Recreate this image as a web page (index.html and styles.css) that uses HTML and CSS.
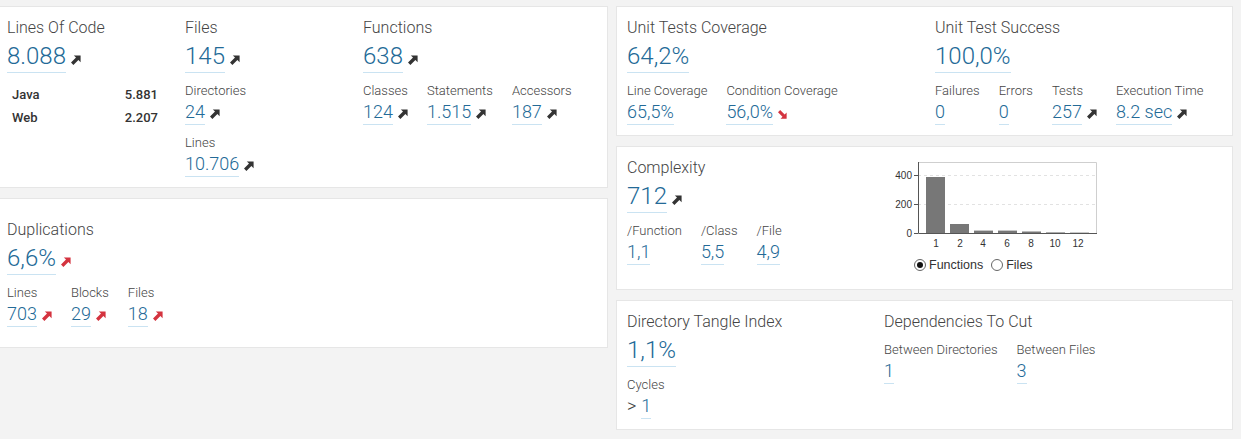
FILE: index.html
```html
<!DOCTYPE html>
<html lang="en">
<head>
<meta charset="utf-8">
<title>Overview</title>
<link rel="stylesheet" href="styles.css">
</head>
<body>
<svg class="defs" width="0" height="0" aria-hidden="true">
  <symbol id="up" viewBox="0 0 10 10"><path d="M9.6 0.4V7.2L7.4 5 2.4 10 0 7.6 5 2.6 2.8 0.4Z"/></symbol>
  <symbol id="down" viewBox="0 0 10 10"><path d="M9.6 9.6V2.8L7.4 5 2.4 0 0 2.4 5 7.4 2.8 9.6Z"/></symbol>
</svg>
<div class="page">
  <div class="column col-left">
    <section class="card">
      <div class="col w178">
        <div class="title">Lines Of Code</div>
        <div class="big-row"><span class="big">8.088</span><svg class="trend"><use href="#up"/></svg></div>
        <div class="lang-list">
          <div class="lang"><span>Java</span><span>5.881</span></div>
          <div class="lang"><span>Web</span><span>2.207</span></div>
        </div>
      </div>
      <div class="col w178">
        <div class="title">Files</div>
        <div class="big-row"><span class="big">145</span><svg class="trend"><use href="#up"/></svg></div>
        <div class="metric">
          <div class="label">Directories</div>
          <div class="value-row"><span class="val">24</span><svg class="trend"><use href="#up"/></svg></div>
        </div>
        <div class="metric">
          <div class="label">Lines</div>
          <div class="value-row"><span class="val">10.706</span><svg class="trend"><use href="#up"/></svg></div>
        </div>
      </div>
      <div class="col grow">
        <div class="title">Functions</div>
        <div class="big-row"><span class="big">638</span><svg class="trend"><use href="#up"/></svg></div>
        <div class="metrics-row">
          <div class="metric">
            <div class="label">Classes</div>
            <div class="value-row"><span class="val">124</span><svg class="trend"><use href="#up"/></svg></div>
          </div>
          <div class="metric">
            <div class="label">Statements</div>
            <div class="value-row"><span class="val">1.515</span><svg class="trend"><use href="#up"/></svg></div>
          </div>
          <div class="metric">
            <div class="label">Accessors</div>
            <div class="value-row"><span class="val">187</span><svg class="trend"><use href="#up"/></svg></div>
          </div>
        </div>
      </div>
    </section>

    <section class="card card-tall">
      <div class="col grow">
        <div class="title">Duplications</div>
        <div class="big-row"><span class="big">6,6%</span><svg class="trend bad"><use href="#up"/></svg></div>
        <div class="metrics-row">
          <div class="metric">
            <div class="label">Lines</div>
            <div class="value-row"><span class="val">703</span><svg class="trend bad"><use href="#up"/></svg></div>
          </div>
          <div class="metric">
            <div class="label">Blocks</div>
            <div class="value-row"><span class="val">29</span><svg class="trend bad"><use href="#up"/></svg></div>
          </div>
          <div class="metric">
            <div class="label">Files</div>
            <div class="value-row"><span class="val">18</span><svg class="trend bad"><use href="#up"/></svg></div>
          </div>
        </div>
      </div>
    </section>
  </div>

  <div class="column col-right">
    <section class="card">
      <div class="col w308">
        <div class="title">Unit Tests Coverage</div>
        <div class="big-row"><span class="big">64,2%</span></div>
        <div class="metrics-row">
          <div class="metric">
            <div class="label">Line Coverage</div>
            <div class="value-row"><span class="val">65,5%</span></div>
          </div>
          <div class="metric">
            <div class="label">Condition Coverage</div>
            <div class="value-row"><span class="val">56,0%</span><svg class="trend bad down"><use href="#down"/></svg></div>
          </div>
        </div>
      </div>
      <div class="col grow">
        <div class="title">Unit Test Success</div>
        <div class="big-row"><span class="big">100,0%</span></div>
        <div class="metrics-row">
          <div class="metric">
            <div class="label">Failures</div>
            <div class="value-row"><span class="val">0</span></div>
          </div>
          <div class="metric">
            <div class="label">Errors</div>
            <div class="value-row"><span class="val">0</span></div>
          </div>
          <div class="metric">
            <div class="label">Tests</div>
            <div class="value-row"><span class="val">257</span><svg class="trend"><use href="#up"/></svg></div>
          </div>
          <div class="metric">
            <div class="label">Execution Time</div>
            <div class="value-row"><span class="val">8.2 sec</span><svg class="trend"><use href="#up"/></svg></div>
          </div>
        </div>
      </div>
    </section>

    <section class="card">
      <div class="col w256">
        <div class="title">Complexity</div>
        <div class="big-row"><span class="big">712</span><svg class="trend"><use href="#up"/></svg></div>
        <div class="metrics-row">
          <div class="metric">
            <div class="label">/Function</div>
            <div class="value-row"><span class="val">1,1</span></div>
          </div>
          <div class="metric">
            <div class="label">/Class</div>
            <div class="value-row"><span class="val">5,5</span></div>
          </div>
          <div class="metric">
            <div class="label">/File</div>
            <div class="value-row"><span class="val">4,9</span></div>
          </div>
        </div>
      </div>
      <div class="col grow chart">
        <svg class="histogram" width="220" height="98" viewBox="0 0 220 98">
          <line class="grid" x1="35" y1="18.5" x2="214" y2="18.5"/>
          <line class="grid" x1="35" y1="47.5" x2="214" y2="47.5"/>
          <path class="frame" d="M35 5.5H213.5V76"/>
          <rect class="bar" x="43" y="20" width="19" height="56"/>
          <rect class="bar" x="67" y="67" width="19" height="9"/>
          <rect class="bar" x="91" y="73.6" width="19" height="2.4"/>
          <rect class="bar" x="115" y="73.6" width="19" height="2.4"/>
          <rect class="bar" x="139" y="74.5" width="19" height="1.5"/>
          <rect class="bar" x="163" y="75.4" width="19" height="0.6"/>
          <rect class="bar" x="187" y="75.6" width="19" height="0.4"/>
          <path class="axis" d="M35.5 5V76.5H214M31 18.5H35M31 47.5H35M31 76.5H35"/>
          <g class="ylab">
            <text x="29" y="22">400</text>
            <text x="29" y="51">200</text>
            <text x="29" y="80">0</text>
          </g>
          <g class="xlab">
            <text x="53" y="90">1</text>
            <text x="77" y="90">2</text>
            <text x="100" y="90">4</text>
            <text x="124" y="90">6</text>
            <text x="148" y="90">8</text>
            <text x="172" y="90">10</text>
            <text x="195" y="90">12</text>
          </g>
        </svg>
        <div class="legend">
          <span class="legend-item"><span class="radio checked"></span>Functions</span>
          <span class="legend-item"><span class="radio"></span>Files</span>
        </div>
      </div>
    </section>

    <section class="card">
      <div class="col w257">
        <div class="title">Directory Tangle Index</div>
        <div class="big-row"><span class="big">1,1%</span></div>
        <div class="metric">
          <div class="label">Cycles</div>
          <div class="value-row"><span class="prefix">&gt;</span><span class="val">1</span></div>
        </div>
      </div>
      <div class="col grow">
        <div class="title">Dependencies To Cut</div>
        <div class="metrics-row after-title">
          <div class="metric">
            <div class="label">Between Directories</div>
            <div class="value-row"><span class="val">1</span></div>
          </div>
          <div class="metric">
            <div class="label">Between Files</div>
            <div class="value-row"><span class="val">3</span></div>
          </div>
        </div>
      </div>
    </section>
  </div>
</div>
</body>
</html>
```

FILE: styles.css
```css
* { box-sizing: border-box; }

html, body {
  margin: 0;
  background: #f3f3f3;
}

body {
  font-family: Roboto, "Liberation Sans", sans-serif;
  color: #444;
}

.defs { position: absolute; width: 0; height: 0; overflow: hidden; }

.page {
  display: flex;
  gap: 8px;
  padding-top: 6px;
  margin-left: -4px;
  width: 1237px;
}

.column {
  display: flex;
  flex-direction: column;
  gap: 10px;
}

.col-left { width: 612px; }
.col-right { width: 617px; }

.card {
  display: flex;
  background: #fff;
  border: 1px solid #e6e6e6;
  padding: 10px;
}

.card-tall { padding: 20px 10px; }

.col { flex: none; }
.grow { flex: 1; min-width: 0; }
.w178 { width: 178px; }
.w308 { width: 308px; }
.w256 { width: 256px; }
.w257 { width: 257px; }

.title {
  font-size: 16px;
  line-height: 20px;
  font-weight: 300;
  color: #444;
  margin-top: 1px;
}

.big-row {
  display: flex;
  align-items: flex-end;
  margin-top: 3px;
}

.big {
  font-size: 24px;
  line-height: 30px;
  font-weight: 300;
  color: #236a97;
  border-bottom: 1px solid #cae3f2;
  padding-bottom: 1px;
}

.trend {
  flex: none;
  width: 10px;
  height: 10px;
  margin-left: 5px;
  margin-bottom: 8px;
  fill: #333;
}

.trend.bad { fill: #d4333f; }

.metrics-row {
  display: flex;
  gap: 19px;
}

.metric { margin-top: 10px; }
.after-title .metric { margin-top: 10px; }

.label {
  font-size: 13px;
  line-height: 16px;
  font-weight: 300;
  color: #444;
  white-space: nowrap;
}

.value-row {
  display: flex;
  align-items: flex-end;
  margin-top: 2px;
}

.val {
  font-size: 18px;
  line-height: 22px;
  font-weight: 300;
  color: #236a97;
  border-bottom: 1px solid #cae3f2;
  padding-bottom: 1px;
  white-space: nowrap;
}

.value-row .trend {
  width: 10px;
  height: 10px;
  margin-bottom: 6px;
}

.value-row .trend.down {
  width: 9px;
  height: 9px;
  margin-bottom: 6px;
}

.prefix {
  font-size: 18px;
  line-height: 22px;
  font-weight: 300;
  color: #444;
  margin-right: 5px;
  padding-bottom: 2px;
}

.lang-list {
  margin-top: 10px;
  width: 156px;
}

.lang {
  display: flex;
  justify-content: space-between;
  padding: 0 5px;
  font-size: 13px;
  line-height: 23px;
  font-weight: 500;
  color: #333;
}

/* chart */
.chart { padding-bottom: 6px; }

.histogram { display: block; }

.histogram .grid {
  stroke: #e2e2e2;
  stroke-width: 1;
  stroke-dasharray: 3 3;
}

.histogram .frame {
  fill: none;
  stroke: #cfcfcf;
  stroke-width: 1;
}

.histogram .axis {
  fill: none;
  stroke: #555;
  stroke-width: 1;
}

.histogram .bar { fill: #777; }

.histogram text {
  font-family: "Liberation Sans", Arial, sans-serif;
  font-size: 10px;
  fill: #333;
}

.ylab text { text-anchor: end; }
.xlab text { text-anchor: middle; }

.legend {
  display: flex;
  align-items: center;
  margin-top: 2px;
  padding-left: 31px;
  font-family: "Liberation Sans", Arial, sans-serif;
  font-size: 12.5px;
  line-height: 16px;
  color: #333;
}

.legend-item {
  display: flex;
  align-items: center;
  margin-right: 8px;
}

.radio {
  width: 12px;
  height: 12px;
  border: 1px solid #666;
  border-radius: 50%;
  margin-right: 3px;
  display: inline-flex;
  align-items: center;
  justify-content: center;
  background: #fff;
}

.radio.checked::after {
  content: "";
  width: 6px;
  height: 6px;
  border-radius: 50%;
  background: #111;
}
```
